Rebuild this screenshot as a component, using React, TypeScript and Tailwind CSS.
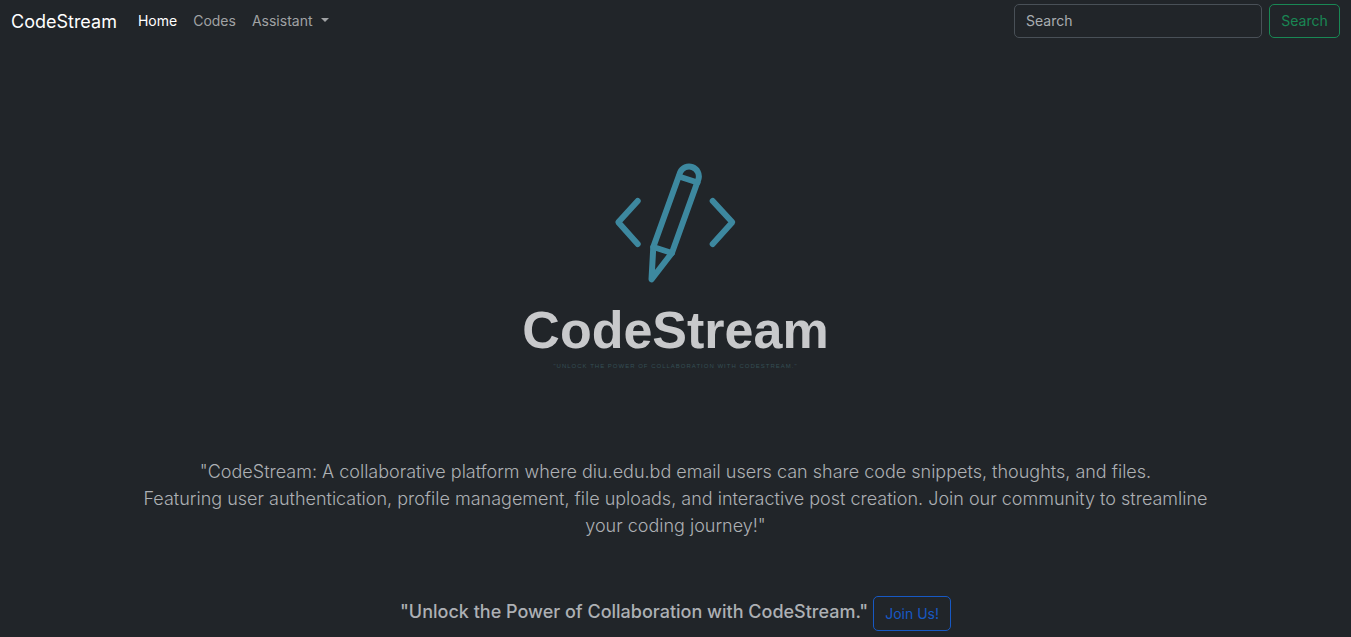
import type { ReactNode } from 'react';

function NavLink({ active = false, children }: { active?: boolean; children: ReactNode }) {
  return (
    <a
      href="#"
      aria-current={active ? 'page' : undefined}
      className={active ? 'px-[7px] text-white' : 'px-[7px] text-[#a0a2a4] hover:text-white'}
    >
      {children}
    </a>
  );
}

function Navbar() {
  return (
    <nav className="flex items-center px-[11px] py-1">
      <a href="#" className="mr-[14px] text-[18px] leading-[27px] text-white">
        CodeStream
      </a>
      <div className="flex items-center gap-[2px] pb-[2px]">
        <NavLink active>Home</NavLink>
        <NavLink>Codes</NavLink>
        <button type="button" aria-haspopup="menu" className="flex items-center gap-2 px-[7px] text-[#a0a2a4]">
          Assistant
          <span className="border-x-4 border-t-4 border-x-transparent border-t-current" />
        </button>
      </div>
      <form className="ml-auto flex gap-[7px]" onSubmit={(event) => event.preventDefault()}>
        <input
          type="search"
          aria-label="Search"
          placeholder="Search"
          className="h-[34px] w-[248px] rounded-[5px] border border-[#495057] bg-transparent px-[11px] pb-[2px] text-[#dee2e6] placeholder:text-[#a9adb1]"
        />
        <button
          type="submit"
          className="h-[34px] w-[71px] rounded-[5px] border border-[#198754] pb-[2px] text-[#198754]"
        >
          Search
        </button>
      </form>
    </nav>
  );
}

function Logo() {
  return (
    <div className="flex flex-col items-center font-['Liberation_Sans',sans-serif]">
      <svg
        width="123"
        height="124"
        viewBox="0 0 123 124"
        fill="none"
        stroke="#3d889f"
        strokeWidth="6"
        strokeLinecap="round"
        strokeLinejoin="round"
        aria-hidden="true"
      >
        <path d="M23.700 41 4.300 62.300 23.700 84M98.700 41 118.300 62.300 98.700 84" />
        <path d="M39.300 87 66.100 12.400A9.800 9.800 0 0 1 84.500 19L57.900 93 37.500 119.300Z" />
        <path d="M65 16.500 83.500 22.500M39.300 87 57.900 93" />
      </svg>
      <div className="mt-4 text-[52px] leading-[60px] font-bold text-[#c8c9cb]">CodeStream</div>
      <div className="mt-px text-[6px] leading-[10px] tracking-[1px] text-[#344e54]">
        "UNLOCK THE POWER OF COLLABORATION WITH CODESTREAM."
      </div>
    </div>
  );
}

export default function App() {
  return (
    <div className="min-h-screen bg-[#212529] font-[Inter,sans-serif] text-[14px] leading-[21px] text-[#adb0b4]">
      <Navbar />
      <main className="px-[135px] pt-[118px] text-center">
        <Logo />
        <p className="mt-[87px] text-[18px] leading-[27px] font-light">
          "CodeStream: A collaborative platform where diu.edu.bd email users can share code snippets, thoughts, and files.
          <br />
          Featuring user authentication, profile management, file uploads, and interactive post creation. Join our
          community to streamline your coding journey!"
        </p>
        <div className="mt-[57px] flex items-start justify-center gap-[5px] pb-[6px]">
          <h1 className="pt-[2px] text-[18px] leading-[27px] font-medium">
            "Unlock the Power of Collaboration with CodeStream."
          </h1>
          <button type="button" className="h-[35px] rounded-[5px] border border-[#1759c4] px-[11px] text-[#1759c4]">
            Join Us!
          </button>
        </div>
      </main>
    </div>
  );
}
